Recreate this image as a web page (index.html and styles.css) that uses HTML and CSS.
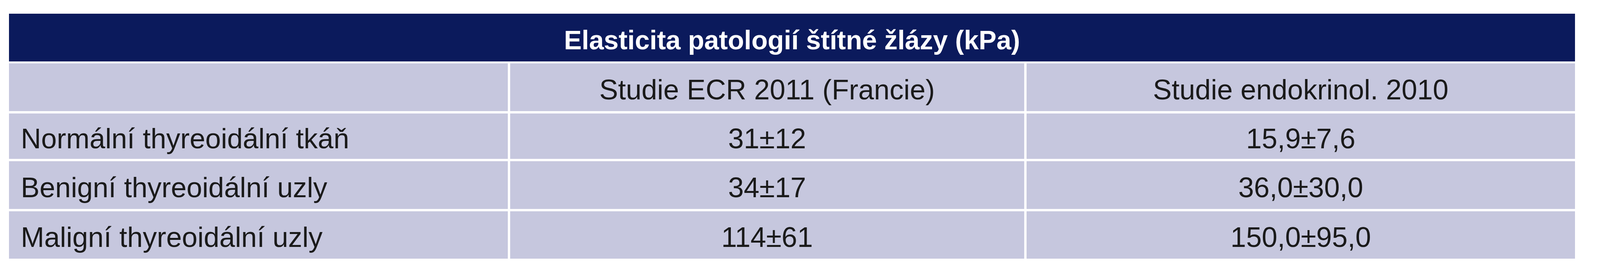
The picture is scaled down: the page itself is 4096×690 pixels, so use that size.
FILE: index.html
```html
<!DOCTYPE html>
<html lang="cs">
<head>
<meta charset="utf-8">
<title>Elasticita patologií štítné žlázy</title>
<link rel="stylesheet" href="styles.css">
</head>
<body>
<div class="page">
  <div class="table" role="table">
    <div class="cell title" role="columnheader">Elasticita patologií štítné žlázy (kPa)</div>
    <div class="cell label" role="cell"></div>
    <div class="cell center" role="columnheader">Studie ECR 2011 (Francie)</div>
    <div class="cell center" role="columnheader">Studie endokrinol. 2010</div>
    <div class="cell label" role="rowheader">Normální thyreoidální tkáň</div>
    <div class="cell center" role="cell">31±12</div>
    <div class="cell center" role="cell">15,9±7,6</div>
    <div class="cell label" role="rowheader">Benigní thyreoidální uzly</div>
    <div class="cell center" role="cell">34±17</div>
    <div class="cell center" role="cell">36,0±30,0</div>
    <div class="cell label" role="rowheader">Maligní thyreoidální uzly</div>
    <div class="cell center" role="cell">114±61</div>
    <div class="cell center" role="cell">150,0±95,0</div>
  </div>
</div>
</body>
</html>
```
FILE: styles.css
```css
html, body {
  margin: 0;
  padding: 0;
  background: #ffffff;
}

.page {
  padding: 34.5px 0 0 23.3px;
  font-family: "Liberation Sans", Arial, sans-serif;
}

.table {
  display: grid;
  grid-template-columns: 1276.4px 1316.1px 1404.1px;
  grid-template-rows: 122.1px 121.7px 116.1px 121.7px 121.7px;
  column-gap: 6px;
  row-gap: 5.9px;
}

.cell {
  display: flex;
  align-items: center;
  background: #c6c7de;
  color: #1a1a1a;
  font-size: 72px;
  line-height: 1;
  padding-top: 12px;
  box-sizing: border-box;
  white-space: nowrap;
}

.title {
  grid-column: 1 / 4;
  justify-content: center;
  background: #0b1a5c;
  color: #ffffff;
  font-weight: bold;
  font-size: 68px;
}

.label {
  padding-left: 30px;
}

.center {
  justify-content: center;
}
```
